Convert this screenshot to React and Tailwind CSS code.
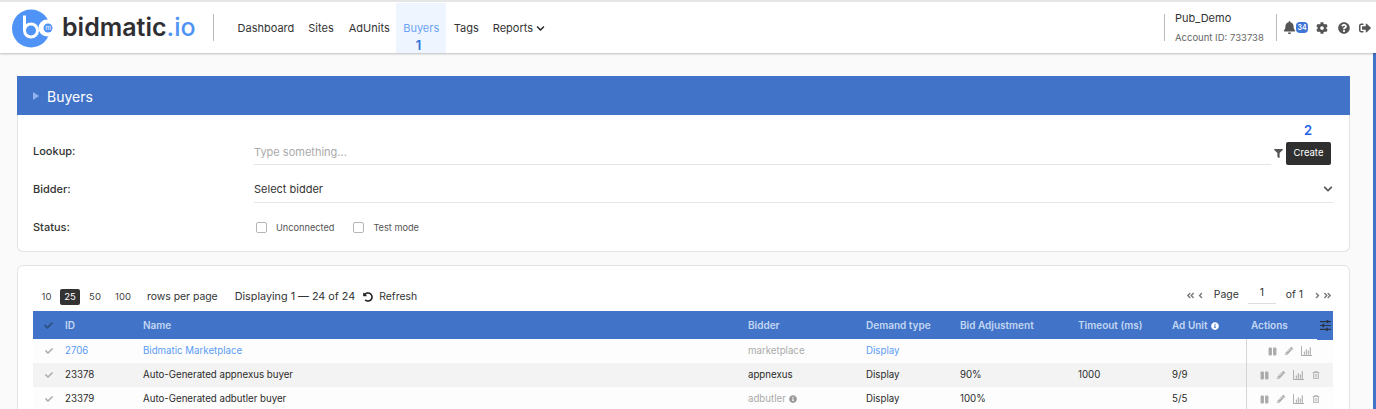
import {
  FaAngleDoubleLeft,
  FaAngleDoubleRight,
  FaAngleLeft,
  FaAngleRight,
  FaBell,
  FaCheck,
  FaChevronDown,
  FaCog,
  FaFilter,
  FaInfoCircle,
  FaPause,
  FaPencilAlt,
  FaQuestionCircle,
  FaRegTrashAlt,
  FaSignOutAlt,
  FaUndoAlt,
} from "react-icons/fa";

const font = { fontFamily: "Inter, sans-serif" };

const gridCols =
  "grid grid-cols-[27px_78px_605px_118px_94px_118px_94px_79px_87px] items-center";

const columns = [
  "ID",
  "Name",
  "Bidder",
  "Demand type",
  "Bid Adjustment",
  "Timeout (ms)",
];

function Logo() {
  return (
    <svg width="46" height="46" viewBox="0 0 46 46" className="shrink-0">
      <circle cx="20" cy="23.5" r="19" fill="#4f93f7" />
      <circle cx="36" cy="23" r="8.5" fill="#fff" />
      <path d="M13.5 10.5V25.5" stroke="#fff" strokeWidth="3" fill="none" />
      <circle cx="20" cy="25.5" r="6.5" stroke="#fff" strokeWidth="3" fill="#4f93f7" />
      <circle cx="37" cy="23" r="4.5" fill="#4f93f7" />
      <text x="37" y="25" fontSize="6.5" fill="#fff" textAnchor="middle" fontFamily="Inter, sans-serif">
        m
      </text>
    </svg>
  );
}

function ChartIcon({ className }) {
  return (
    <svg width="11" height="10" viewBox="0 0 12 11" className={className} fill="currentColor">
      <path d="M0 0h1v10h11v1H0z" />
      <path d="M3 6h1.2v3.5H3zM5.2 3.5h1.2v6H5.2zM7.4 5h1.2v4.5H7.4zM9.6 1.5h1.2v8H9.6z" />
    </svg>
  );
}

function SlidersIcon() {
  return (
    <svg width="11" height="11" viewBox="0 0 10 10" fill="#2b3445">
      <path d="M0 1h10v1H0zM0 4.5h10v1H0zM0 8h10v1H0z" />
      <path d="M6 0h1.6v3H6zM2.2 3.5h1.6v3H2.2zM5.5 7h1.6v3H5.5z" />
    </svg>
  );
}

function Checkbox({ label }) {
  return (
    <label className="flex items-center">
      <span className="size-[11px] rounded-[2px] border border-[#b5b5b5] bg-white" />
      <span className="ml-[9px] text-[9.2px] text-[#555]">{label}</span>
    </label>
  );
}

function Row({ row, striped }) {
  return (
    <div className={`${gridCols} h-6 text-[9.7px] ${striped ? "bg-[#f3f3f3]" : "bg-[#fdfdfd]"}`}>
      <div className="flex justify-center pl-[4px]">
        <FaCheck className="size-[8px] text-[#aaa]" />
      </div>
      <div className={`pl-[5px] pt-[1px] ${row.link ? "text-[#5b9cf6]" : "text-[#2a2a2a]"}`}>{row.id}</div>
      <div className={`pl-[5px] pt-[1px] ${row.link ? "text-[#5b9cf6]" : "text-[#2a2a2a]"}`}>{row.name}</div>
      <div className={`flex items-center gap-[3px] pl-[5px] pt-[1px] ${row.muted ? "text-[#aaa]" : "text-[#2a2a2a]"}`}>
        {row.bidder}
        {row.bidderInfo && <FaInfoCircle className="size-[8px] text-[#999]" />}
      </div>
      <div className={`pl-[5px] pt-[1px] ${row.link ? "text-[#5b9cf6]" : "text-[#2a2a2a]"}`}>Display</div>
      <div className="pl-[5px] pt-[1px] text-[#2a2a2a]">{row.bid}</div>
      <div className="pl-[5px] pt-[1px] text-[#2a2a2a]">{row.timeout}</div>
      <div className="pl-[5px] pt-[1px] text-[#2a2a2a]">{row.adUnit}</div>
      <div className="flex h-full items-center justify-center gap-[8px] border-l border-[#d5d5d5] pr-[1px] text-[#aaa]">
        <FaPause className="size-[9px]" />
        <FaPencilAlt className="size-[8px]" />
        <ChartIcon />
        {!row.link && <FaRegTrashAlt className="size-[8px]" />}
      </div>
    </div>
  );
}

const rows = [
  { id: "2706", name: "Bidmatic Marketplace", bidder: "marketplace", muted: true, link: true },
  { id: "23378", name: "Auto-Generated appnexus buyer", bidder: "appnexus", bid: "90%", timeout: "1000", adUnit: "9/9" },
  { id: "23379", name: "Auto-Generated adbutler buyer", bidder: "adbutler", muted: true, bidderInfo: true, bid: "100%", adUnit: "5/5" },
];

export default function App() {
  return (
    <div className="relative h-[409px] overflow-hidden bg-[#fafafb] pr-[26px]" style={font}>
      <header className="absolute inset-x-0 top-0 z-10 flex h-[53px] items-center border-t-2 border-[#e6e6e6] bg-white shadow-[0_1px_2px_rgba(0,0,0,0.25)]">
        <div className="ml-[11px]">
          <Logo />
        </div>
        <div className="ml-[5px] text-[25px] font-semibold leading-none text-[#2f2f33]">
          bidmatic<span className="font-medium text-[#4f93f7]">.io</span>
        </div>
        <div className="ml-[17px] h-[27px] w-px bg-[#bbb]" />
        <nav className="ml-[14px] flex h-full items-center pt-[1px] text-[11px] text-[#333]">
          <a className="px-[10px]">Dashboard</a>
          <a className="px-[4px]">Sites</a>
          <a className="pl-[11px] pr-[6px]">AdUnits</a>
          <a className="relative flex h-full w-[50px] items-center justify-center bg-[#eff5fe] pl-[1px] text-[#6ba3f7]">
            Buyers
            <span className="absolute bottom-0 left-[20px] text-[13px] font-semibold leading-[16px] text-[#2f6fdc]">1</span>
          </a>
          <a className="px-[8px]">Tags</a>
          <a className="ml-[6px] flex items-center gap-[3px]">
            Reports <FaChevronDown className="size-[9px] text-[#222]" />
          </a>
        </nav>
        <div className="ml-auto flex h-[27px] items-center">
          <div className="flex h-full w-[112px] flex-col justify-between border-l border-[#bbb] pl-[10px] leading-none">
            <div className="mt-[-3px] text-[11px] leading-[14px] text-[#333]">Pub_Demo</div>
            <div className="mb-[-4px] text-[9.5px] leading-[14px] text-[#666]">Account ID: 733738</div>
          </div>
          <div className="flex h-full w-[100px] items-center border-l border-[#bbb] pl-[6px] text-[#555]">
            <FaBell className="size-[13px]" />
            <span className="mr-[8px] w-[12px] rounded-[4px] bg-[#3f75d6] text-center text-[7px] font-semibold leading-[11px] text-white">
              34
            </span>
            <FaCog className="mr-[10px] size-[12px]" />
            <FaQuestionCircle className="mr-[9px] size-[12px]" />
            <FaSignOutAlt className="size-[12px]" />
          </div>
        </div>
      </header>

      <aside className="absolute right-0 top-[52px] h-full w-[3px] bg-[#4174c8]" />

      <main className="ml-[17px] pt-[76px]">
        <section>
          <div className="flex h-[39px] items-center bg-[#4174c8] pl-[16px] pt-[1px] text-[14px] text-white">
            <span className="mr-[8px] border-y-[4px] border-l-[6px] border-y-transparent border-l-[#8fb4ee]" />
            Buyers
          </div>
          <div className="h-[137px] rounded-b-[6px] border-x border-b border-[#e3e3e3] bg-white pl-[15px] pr-[16px] text-[11px] font-medium text-[#333]">
            <div className="relative flex h-[55px] items-end pb-[5px]">
              <div className="w-[221px] pb-[6px]">Lookup:</div>
              <div className="flex flex-1 items-center">
                <div className="h-[24px] flex-1 border-b border-[#e5e5e5] text-[11px] font-normal leading-[23px] text-[#aaa]">
                  Type something...
                </div>
                <FaFilter className="mx-[3px] size-[9px] text-[#555]" />
                <button className="mr-[2px] h-[23px] w-[45px] rounded-[2px] bg-[#2f2f2f] text-[9.5px] font-normal text-white">
                  Create
                </button>
              </div>
              <span className="absolute right-[21px] top-[9px] text-[13px] font-semibold leading-none text-[#2563eb]">
                2
              </span>
            </div>
            <div className="flex h-[38px] items-center">
              <div className="w-[221px]">Bidder:</div>
              <div className="flex h-[27px] flex-1 items-center justify-between border-b border-[#e5e5e5] pt-[1px] font-normal">
                Select bidder
                <FaChevronDown className="size-[10px] text-[#555]" />
              </div>
            </div>
            <div className="flex h-[38px] items-center">
              <div className="w-[223px]">Status:</div>
              <div className="flex gap-[19px] pt-[1px] font-normal">
                <Checkbox label="Unconnected" />
                <Checkbox label="Test mode" />
              </div>
            </div>
          </div>
        </section>

        <section className="mt-[13px] rounded-t-[6px] border border-[#e3e3e3] bg-white pb-4 pl-[15px] pr-[16px]">
          <div className="flex h-[45px] items-end justify-between pb-[7px] text-[10.4px] text-[#333]">
            <div className="mb-[-1px] flex items-center">
              <div className="flex items-center text-[9.5px] text-[#444]">
                <span className="w-[27px] text-center">10</span>
                <span className="flex h-[16px] w-[20px] items-center justify-center rounded-[2px] bg-[#333] text-white">25</span>
                <span className="w-[30px] text-center">50</span>
                <span className="w-[26px] text-center">100</span>
              </div>
              <span className="ml-[11px]">rows per page</span>
              <span className="ml-[17px] text-[10.8px]">Displaying 1 — 24 of 24</span>
              <span className="ml-[8px] flex items-center gap-[6px]">
                <FaUndoAlt className="size-[10px] text-[#222]" /> Refresh
              </span>
            </div>
            <div className="mr-[1px] flex items-center text-[#333]">
              <FaAngleDoubleLeft className="size-[9px] text-[#777]" />
              <FaAngleLeft className="ml-[1px] size-[9px] text-[#777]" />
              <span className="ml-[9px]">Page</span>
              <span className="ml-[9px] w-[28px] border-b border-[#ddd] pb-[3px] text-center leading-[14px]">1</span>
              <span className="ml-[10px]">of 1</span>
              <FaAngleRight className="ml-[10px] size-[9px] text-[#777]" />
              <FaAngleDoubleRight className="ml-[1px] size-[9px] text-[#777]" />
            </div>
          </div>

          <div className={`${gridCols} h-[28px] bg-[#4174c8] text-[10px] font-semibold text-[#c4d6f2]`}>
            <div className="flex justify-center pl-[4px]">
              <FaCheck className="size-[9px] text-[#2f4f80]" />
            </div>
            {columns.map((column) => (
              <div className="pl-[5px]" key={column}>
                {column}
              </div>
            ))}
            <div className="flex items-center gap-[3px] pl-[5px]">
              Ad Unit <FaInfoCircle className="size-[8px] text-white" />
            </div>
            <div className="flex h-full items-start justify-between pl-[5px]">
              <span className="leading-[28px]">Actions</span>
              <span className="relative z-[1] flex h-[29px] w-[16px] items-center justify-center bg-[#4174c8]">
                <SlidersIcon />
              </span>
            </div>
          </div>
          {rows.map((row, i) => (
            <Row key={row.id} row={row} striped={i % 2 === 1} />
          ))}
        </section>
      </main>
    </div>
  );
}
